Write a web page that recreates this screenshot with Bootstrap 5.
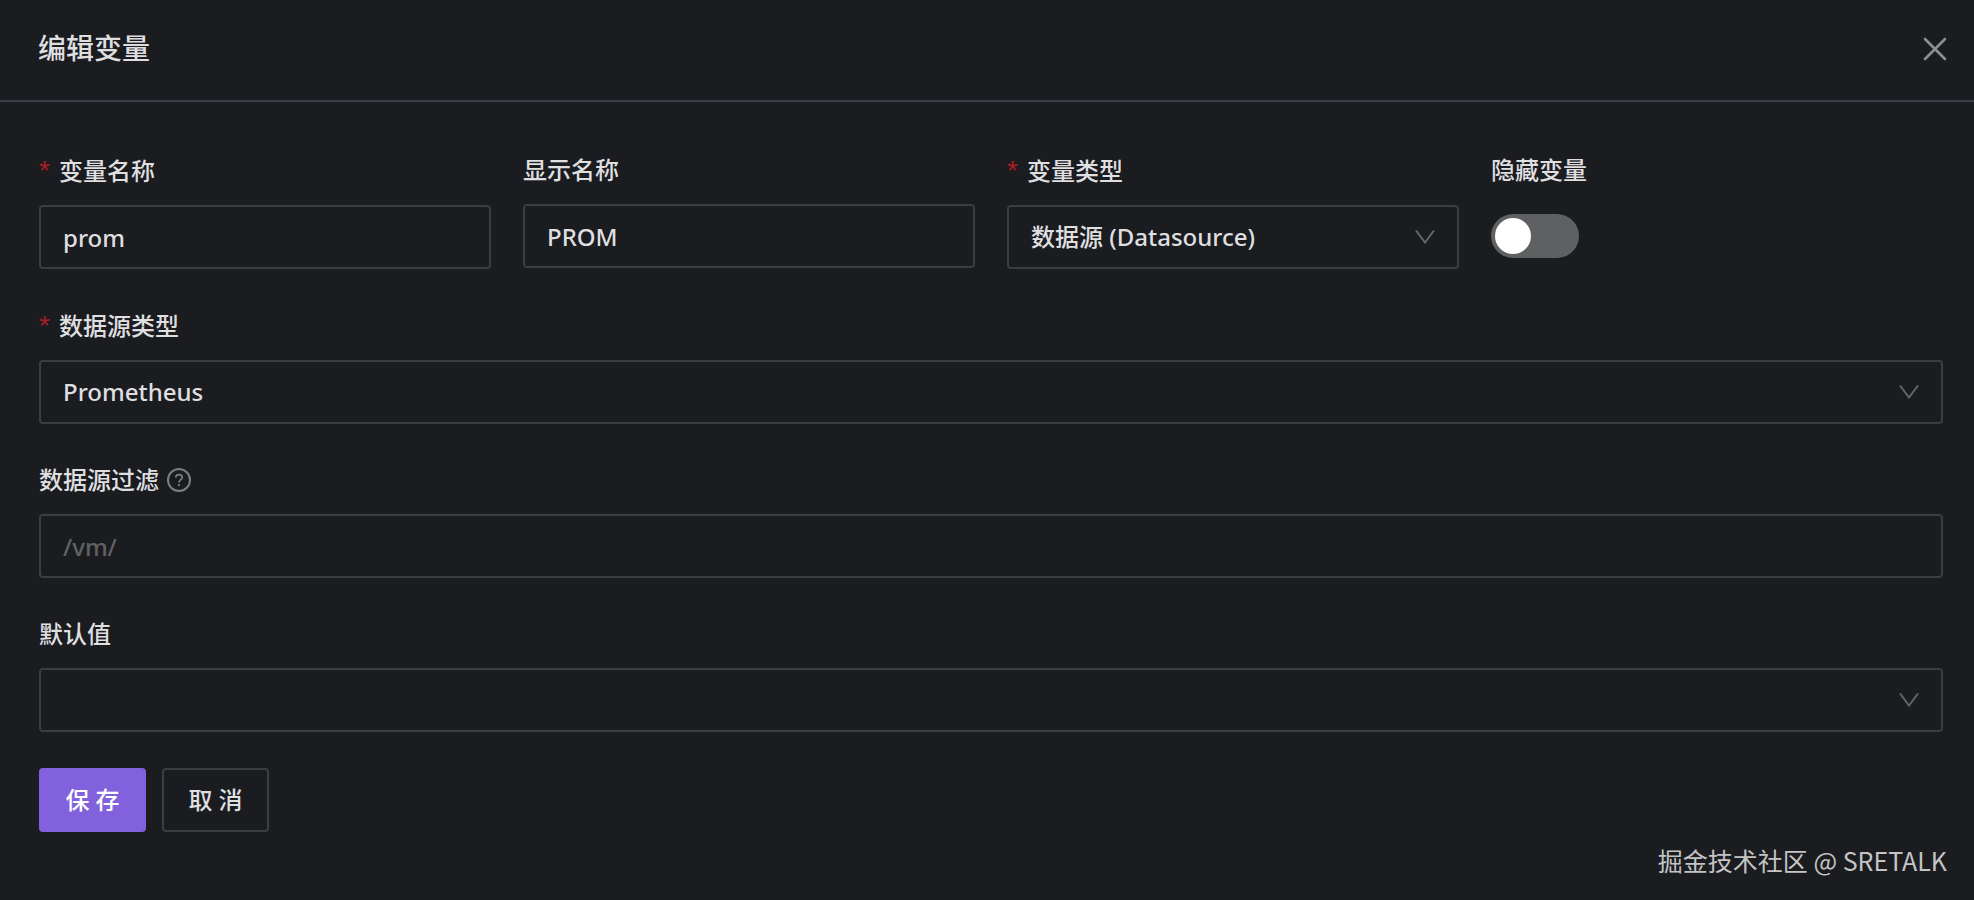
<!DOCTYPE html>
<html lang="zh-CN">
<head>
<meta charset="utf-8">
<meta name="viewport" content="width=device-width, initial-scale=1">
<title>编辑变量</title>
<link href="https://cdn.jsdelivr.net/npm/bootstrap@5.3.0/dist/css/bootstrap.min.css" rel="stylesheet">
<style>
  :root {
    --panel: #1b1c1f;
    --line: #3c3d40;
    --ink: #dfdfe0;
    --faint: #616264;
  }
  body {
    background: var(--panel);
    color: var(--ink);
    font-family: "Noto Sans", "Noto Sans CJK SC", sans-serif;
    font-size: 24px;
    line-height: 32px;
  }
  .panel-head {
    padding: 28px 20px 32px 38px;
    border-bottom: 2px solid #3b3c45;
  }
  .panel-title {
    font-size: 28px;
    line-height: 40px;
    font-weight: 500;
  }
  .close-btn {
    padding: 5px 4px 3px;
    line-height: 0;
    color: #8d8e8f;
  }
  .panel-form { padding: 52px 31px 0 39px; }
  .fields {
    --bs-gutter-x: 32px;
    row-gap: 40px;
  }
  .field-label {
    display: flex;
    align-items: center;
    margin-bottom: 18px;
    font-weight: 500;
  }
  .field-label.required { padding-top: 1px; }
  .field-label.required::before {
    content: "*";
    width: 20px;
    color: #a61d24;
    font-family: "Liberation Sans", sans-serif;
    font-size: 28px;
    font-weight: 400;
  }
  .help-icon { margin-left: 8px; color: #7d7e80; }
  .field-box, .field-box:focus {
    height: 64px;
    padding: 0 22px;
    border: 2px solid var(--line);
    border-radius: 4px;
    background-color: transparent;
    color: var(--ink);
    font-size: 24px;
    font-weight: 500;
    line-height: 32px;
    box-shadow: none;
  }
  .field-box:focus { border-color: #8162dc; }
  .field-box::placeholder { color: var(--faint); opacity: 1; }
  select.field-box, select.field-box:focus {
    padding-right: 64px;
    background-image: url("data:image/svg+xml,%3Csvg xmlns='http://www.w3.org/2000/svg' viewBox='0 0 20 14'%3E%3Cpath d='M1 .5 10 12.5 19 .5' fill='none' stroke='%23636466' stroke-width='2'/%3E%3C/svg%3E");
    background-position: right 22px center;
    background-size: 20px 14px;
  }
  select.field-box option { background: var(--panel); }
  .toggle.form-switch { padding: 10px 0 0; min-height: 0; margin: 0; }
  .toggle .form-check-input, .toggle .form-check-input:focus {
    display: block;
    float: none;
    width: 88px;
    height: 44px;
    margin: 0;
    border: 0;
    border-radius: 22px;
    background-color: #5f6062;
    background-image: url("data:image/svg+xml,%3Csvg xmlns='http://www.w3.org/2000/svg' viewBox='0 0 44 44'%3E%3Ccircle cx='22' cy='22' r='18' fill='%23fff'/%3E%3C/svg%3E");
    background-size: 44px 44px;
    box-shadow: none;
  }
  .toggle .form-check-input:checked { background-color: #8162dc; }
  .actions { padding-top: 36px; gap: 16px; }
  .act {
    height: 64px;
    min-width: 107px;
    padding: 0 24px;
    border: 2px solid var(--line);
    border-radius: 4px;
    color: var(--ink);
    font-size: 24px;
    font-weight: 500;
    line-height: 32px;
  }
  .act-main, .act-main:hover { background: #8162dc; border-color: #8162dc; color: #fff; }
  .act:hover { border-color: #8162dc; color: #fff; }
  .credit {
    padding: 0 27px 24px;
    color: #c4c4c5;
    font-family: "Noto Sans CJK SC", sans-serif;
    font-size: 25px;
  }
</style>
</head>
<body>
<div class="d-flex flex-column min-vh-100">
  <header class="panel-head d-flex justify-content-between align-items-center">
    <h1 class="panel-title m-0">编辑变量</h1>
    <button type="button" class="btn border-0 close-btn" aria-label="关闭">
      <svg width="30" height="30" viewBox="0 0 30 30" fill="none" stroke="currentColor" stroke-width="2.6" stroke-linecap="round"><path d="M5 5 25 25M25 5 5 25"/></svg>
    </button>
  </header>

  <form class="panel-form">
    <div class="row fields">
      <div class="col-3">
        <label class="field-label required" for="name">变量名称</label>
        <input class="form-control field-box" id="name" type="text" value="prom">
      </div>
      <div class="col-3">
        <label class="field-label" for="title">显示名称</label>
        <input class="form-control field-box" id="title" type="text" value="PROM">
      </div>
      <div class="col-3">
        <label class="field-label required" for="kind">变量类型</label>
        <select class="form-select field-box" id="kind"><option>数据源 (Datasource)</option></select>
      </div>
      <div class="col-3">
        <label class="field-label" for="hide">隐藏变量</label>
        <div class="form-check form-switch toggle">
          <input class="form-check-input" id="hide" type="checkbox" role="switch">
        </div>
      </div>

      <div class="col-12">
        <label class="field-label required" for="source">数据源类型</label>
        <select class="form-select field-box" id="source"><option>Prometheus</option></select>
      </div>

      <div class="col-12">
        <label class="field-label" for="filter">数据源过滤
          <svg class="help-icon" width="24" height="24" viewBox="0 0 24 24" fill="none" stroke="currentColor" stroke-width="2" aria-hidden="true"><circle cx="12" cy="12" r="11"/><path d="M8.8 9.6C8.8 7.6 10.1 6.6 12 6.6S15.2 7.7 15.2 9.4C15.2 11.7 12 11.8 12 14.6" stroke-width="1.7"/><circle cx="12" cy="17.2" r="1.1" fill="currentColor" stroke="none"/></svg>
        </label>
        <input class="form-control field-box" id="filter" type="text" placeholder="/vm/">
      </div>

      <div class="col-12">
        <label class="field-label" for="fallback">默认值</label>
        <select class="form-select field-box" id="fallback"><option></option></select>
      </div>
    </div>

    <div class="actions d-flex">
      <button type="button" class="btn act act-main">保 存</button>
      <button type="button" class="btn act">取 消</button>
    </div>
  </form>

  <footer class="credit mt-auto text-end">掘金技术社区 @ SRETALK</footer>
</div>
<script src="https://cdn.jsdelivr.net/npm/bootstrap@5.3.0/dist/js/bootstrap.bundle.min.js"></script>
</body>
</html>
